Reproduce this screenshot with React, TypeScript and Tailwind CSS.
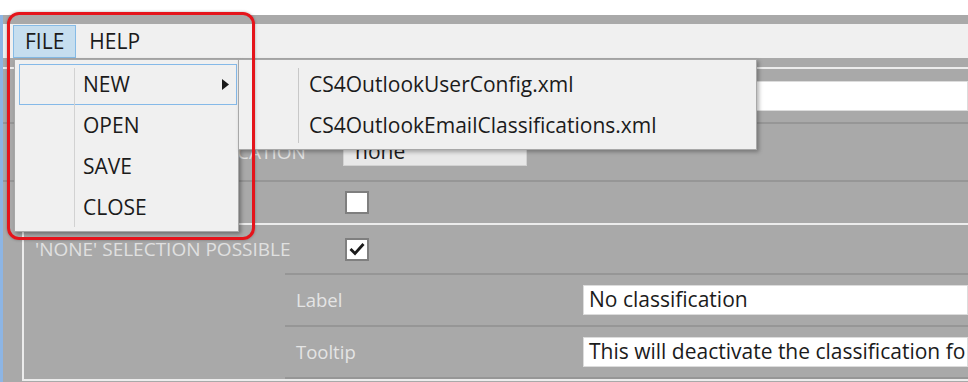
import React from "react";

const font = "font-['Open_Sans','Noto_Sans',sans-serif]";

function Check({ checked }: { checked?: boolean }) {
  return (
    <div className="w-[24px] h-[23px] bg-white border-2 border-[#7f7f7f] flex items-center justify-center">
      {checked && (
        <svg width="16" height="14" viewBox="0 0 16 14">
          <path d="M1.5 7 L6 11.5 L14.5 2" fill="none" stroke="#1a1a1a" strokeWidth="2.8" />
        </svg>
      )}
    </div>
  );
}

function Line({ light }: { light?: boolean }) {
  return <div className={light ? "h-[2px] bg-[#ececec]" : "h-[2px] bg-[#969696]"} />;
}

export default function App() {
  return (
    <div className={`relative w-[968px] h-[382px] overflow-hidden bg-[#a9a9a9] ${font}`}>
      {/* window title strip, mostly cut off */}
      <div className="h-[15px] bg-white" />

      <div className="flex h-[367px]">
        <div className="w-[3px] bg-[#8db5e4]" />
        <div className="flex-1 flex flex-col">
          <div className="h-[9px]" />

          {/* menu bar */}
          <div className="h-[34px] bg-[#f0f0f0] flex items-stretch pl-[10px] pt-[1px] text-[21px] text-[#1b1b1b]">
            <div className="px-[11px] flex items-center bg-[#c6deef] border border-[#86bbe6]">FILE</div>
            <div className="px-[13px] flex items-center">HELP</div>
          </div>

          {/* form */}
          <div className="h-[9px]" />
          <Line light />
          <div className="h-[53px] flex items-center">
            <div className="w-[340px]" />
            <div className="flex-1 h-[30px] bg-white border border-[#dcdcdc]" />
          </div>
          <Line />
          <div className="h-[56px] flex items-center">
            <div className="w-[340px] pl-[32px] text-[19px] text-[#e0e0e0] whitespace-nowrap">PRESELECTED CLASSIFICATION</div>
            <div className="w-[184px] h-[27px] bg-[#e8e8e8] border border-[#d2d2d2] px-[11px] flex items-center text-[21px] text-[#1b1b1b]">
              none
            </div>
          </div>
          <Line />
          <div className="h-[41px] flex items-center">
            <div className="w-[342px]" />
            <Check />
          </div>

          {/* group box */}
          <div className="ml-[19px] border-t-2 border-l-2 border-b-2 border-[#ececec] flex flex-col">
            <div className="h-[48px] flex items-center">
              <div className="w-[321px] pl-[11px] text-[19px] text-[#e0e0e0] whitespace-nowrap">'NONE' SELECTION POSSIBLE</div>
              <Check checked />
            </div>
            <div className="ml-[261px] flex flex-col text-[18.5px]">
              <Line />
              <div className="h-[50px] flex items-center">
                <div className="w-[298px] pl-[11px] text-[#e4e4e4]">Label</div>
                <div className="flex-1 h-[30px] bg-white border border-[#dcdcdc] pl-[5px] flex items-center text-[21px] text-[#1b1b1b]">
                  No classification
                </div>
              </div>
              <Line />
              <div className="h-[50px] flex items-center">
                <div className="w-[298px] pl-[11px] text-[#e4e4e4]">Tooltip</div>
                <div className="flex-1 h-[30px] bg-white border border-[#dcdcdc] pl-[5px] flex items-center text-[21px] text-[#1b1b1b] whitespace-nowrap overflow-hidden">
                  This will deactivate the classification fo
                </div>
              </div>
              <Line />
            </div>
          </div>
        </div>
      </div>

      {/* FILE dropdown */}
      <div className="absolute left-[14px] top-[59px] w-[225px] h-[173px] bg-[#f0f0f0] border border-[#a8a8a8] shadow-[2px_2px_4px_rgba(0,0,0,0.35)] pt-[4px] pl-[4px] pr-[1px] text-[21px] text-[#1b1b1b]">
        <div className="relative h-full">
          <div className="absolute left-[55px] top-[4px] bottom-[4px] w-px bg-[#d2d2d2]" />
          <div className="h-[41px] flex items-center border border-[#85b9e8] pl-[63px] pr-[7px]">
            <span className="flex-1">NEW</span>
            <svg width="7" height="11" viewBox="0 0 7 11">
              <path d="M0 0 L7 5.5 L0 11 Z" fill="#1b1b1b" />
            </svg>
          </div>
          <div className="h-[41px] flex items-center pl-[64px]">OPEN</div>
          <div className="h-[41px] flex items-center pl-[64px]">SAVE</div>
          <div className="h-[41px] flex items-center pl-[64px]">CLOSE</div>
        </div>
      </div>

      {/* NEW submenu */}
      <div className="absolute left-[238px] top-[59px] w-[519px] h-[91px] bg-[#f0f0f0] border border-[#a8a8a8] shadow-[2px_2px_4px_rgba(0,0,0,0.3)] pt-[4px] text-[21px] text-[#1b1b1b]">
        <div className="relative">
          <div className="absolute left-[59px] top-[4px] h-[75px] w-px bg-[#c8c8c8]" />
          <div className="h-[41px] flex items-center pl-[70px]">CS4OutlookUserConfig.xml</div>
          <div className="h-[41px] flex items-center pl-[70px]">CS4OutlookEmailClassifications.xml</div>
        </div>
      </div>

      {/* red highlight annotation */}
      <div className="absolute left-[7px] top-[12px] w-[248px] h-[228px] border-[3px] border-[#e5141b] rounded-[12px] shadow-[0_0_3px_rgba(0,0,0,0.3)]" />
    </div>
  );
}
